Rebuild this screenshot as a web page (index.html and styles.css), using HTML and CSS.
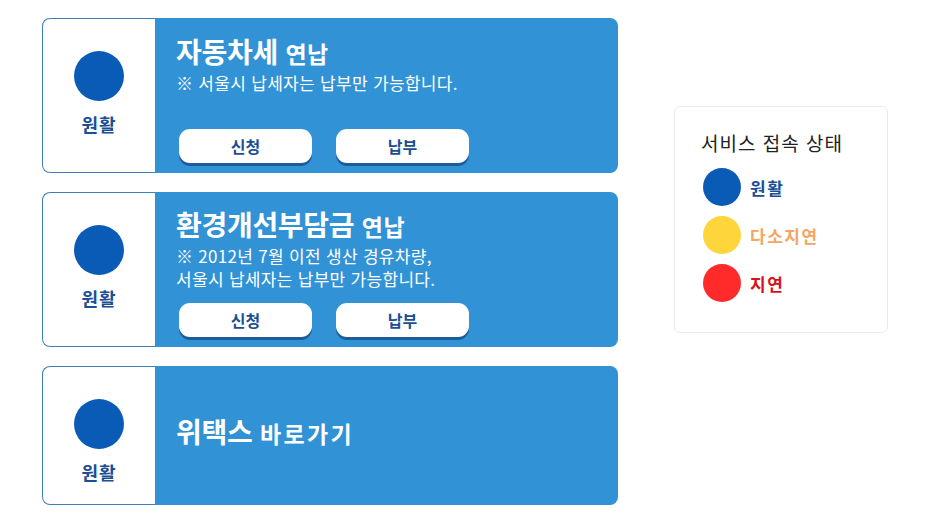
FILE: index.html
```html
<!DOCTYPE html>
<html lang="ko">
<head>
<meta charset="utf-8">
<link rel="stylesheet" href="styles.css">
</head>
<body>
<div class="page">
  <div class="cards">
    <div class="card">
      <div class="status">
        <span class="dot"></span>
        <span class="status-label">원활</span>
      </div>
      <div class="body">
        <div class="text">
          <h2 class="title">자동차세 <small>연납</small></h2>
          <p class="sub">※ 서울시 납세자는 납부만 가능합니다.</p>
        </div>
        <div class="btns">
          <a class="btn">신청</a>
          <a class="btn">납부</a>
        </div>
      </div>
    </div>
    <div class="card">
      <div class="status">
        <span class="dot"></span>
        <span class="status-label">원활</span>
      </div>
      <div class="body">
        <div class="text">
          <h2 class="title title-2">환경개선부담금 <small>연납</small></h2>
          <p class="sub">※ 2012년 7월 이전 생산 경유차량,<br>서울시 납세자는 납부만 가능합니다.</p>
        </div>
        <div class="btns">
          <a class="btn">신청</a>
          <a class="btn">납부</a>
        </div>
      </div>
    </div>
    <div class="card card-short">
      <div class="status">
        <span class="dot"></span>
        <span class="status-label">원활</span>
      </div>
      <div class="body body-center">
        <h2 class="title">위택스 <small class="big">바로가기</small></h2>
      </div>
    </div>
  </div>
  <div class="legend">
    <h3 class="legend-title">서비스 접속 상태</h3>
    <ul class="legend-list">
      <li class="legend-item"><span class="ldot ldot-good"></span><span class="ltext good">원활</span></li>
      <li class="legend-item"><span class="ldot ldot-mid"></span><span class="ltext mid">다소지연</span></li>
      <li class="legend-item"><span class="ldot ldot-bad"></span><span class="ltext bad">지연</span></li>
    </ul>
  </div>
</div>
</body>
</html>
```

FILE: styles.css
```css
* { box-sizing: border-box; }
html, body { margin: 0; padding: 0; background: #fff; }
body {
  font-family: "Noto Sans CJK KR", "Noto Sans", sans-serif;
  width: 938px;
  height: 516px;
  overflow: hidden;
}
.page {
  display: flex;
  align-items: flex-start;
  padding: 18px 0 0 42px;
  gap: 56px;
}
.cards {
  display: flex;
  flex-direction: column;
  gap: 19px;
  width: 576px;
}
.card {
  display: flex;
  height: 155px;
}
.card-short { height: 139px; }
.status {
  width: 113px;
  flex: none;
  display: flex;
  flex-direction: column;
  align-items: center;
  padding-top: 32px;
  border: 1px solid #3c7fbb;
  border-right: none;
  border-radius: 8px 0 0 8px;
  background: #fff;
}
.dot {
  width: 50px;
  height: 50px;
  border-radius: 50%;
  background: #0a5bb6;
}
.status-label {
  margin-top: 11px;
  font-size: 18px;
  line-height: 24px;
  font-weight: 700;
  color: #1b4f93;
  letter-spacing: 1px;
}
.body {
  flex: 1;
  background: #3292d6;
  border-radius: 0 8px 8px 0;
  padding: 18px 0 10px 21px;
  display: flex;
  flex-direction: column;
  justify-content: space-between;
  color: #fff;
}
.body-center {
  justify-content: center;
  padding-top: 0;
  padding-bottom: 8px;
}
.title {
  margin: 0;
  font-size: 28px;
  line-height: 30px;
  font-weight: 700;
  letter-spacing: -0.3px;
}
.title-2 { margin-top: -1px; }
.title small {
  font-size: 23px;
  letter-spacing: 0.5px;
}
.title small.big { font-size: 23px; letter-spacing: 2.4px; }
.sub {
  margin: 3px 0 0;
  font-size: 17px;
  line-height: 23px;
  letter-spacing: 0.3px;
  font-weight: 400;
}
.btns {
  display: flex;
  gap: 24px;
  padding-left: 3px;
}
.btn {
  width: 133px;
  height: 34px;
  border-radius: 11px;
  background: #fff;
  box-shadow: 0 3px 0 #1d5c99;
  display: flex;
  align-items: center;
  justify-content: center;
  font-size: 16px;
  font-weight: 700;
  color: #1b4f93;
}
.legend {
  margin-top: 88px;
  width: 214px;
  height: 227px;
  border: 1px solid #ececec;
  border-radius: 6px;
  padding: 22px 0 0 26px;
}
.legend-title {
  margin: 0;
  font-size: 19px;
  line-height: 28px;
  font-weight: 400;
  color: #222;
  letter-spacing: 1px;
}
.legend-list {
  list-style: none;
  margin: 11px 0 0;
  padding: 0;
  display: flex;
  flex-direction: column;
  gap: 10px;
}
.legend-item {
  display: flex;
  align-items: center;
  gap: 9px;
  padding-left: 2px;
}
.ldot {
  width: 38px;
  height: 38px;
  border-radius: 50%;
}
.ldot-good { background: #0a5bb6; }
.ldot-mid { background: #fed53a; }
.ldot-bad { background: #ff2a2a; }
.ltext {
  font-size: 17px;
  font-weight: 700;
  letter-spacing: 1.5px;
}
.good { color: #1b4f93; }
.mid { color: #f5a562; }
.bad { color: #d9101a; }
```
